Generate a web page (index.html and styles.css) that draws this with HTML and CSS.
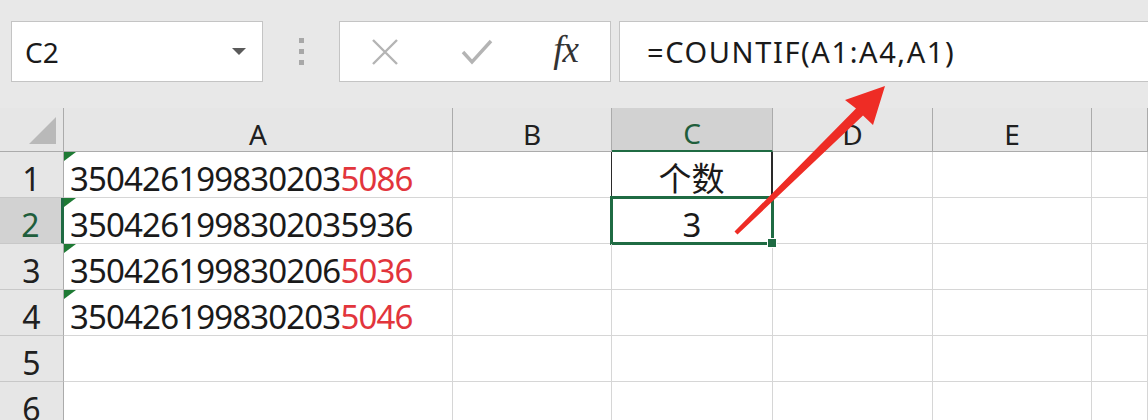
FILE: index.html
```html
<!DOCTYPE html>
<html lang="zh">
<head>
    <meta charset="UTF-8" />
    <title>COUNTIF</title>
    <link rel="stylesheet" href="styles.css">
</head>
<body>
<div class="toolbar">
    <div class="name-box">
        <span>C2</span>
        <svg class="caret" width="14" height="8" viewBox="0 0 14 8"><path d="M0 0 L14 0 L7 7 Z" fill="#5a5a5a"/></svg>
    </div>
    <div class="grip"><i></i><i></i><i></i></div>
    <div class="fn-box">
        <svg class="fn-icon" width="30" height="30" viewBox="0 0 30 30"><path d="M3 3 L27 27 M27 3 L3 27" stroke="#b4b4b4" stroke-width="2.4" fill="none"/></svg>
        <svg class="fn-icon" width="34" height="30" viewBox="0 0 34 30"><path d="M3 15 L12 25 L31 4" stroke="#b4b4b4" stroke-width="3.4" fill="none"/></svg>
        <span class="fx">fx</span>
    </div>
    <div class="formula">=COUNTIF(A1:A4,A1)</div>
</div>

<div class="sheet">
    <div class="corner"><span class="corner-tri"></span></div>
    <div class="col-head">A</div>
    <div class="col-head">B</div>
    <div class="col-head active">C</div>
    <div class="col-head">D</div>
    <div class="col-head">E</div>
    <div class="col-head"></div>

    <div class="row-head">1</div>
    <div class="cell text"><span class="mark"></span>350426199830203<em>5086</em></div>
    <div class="cell"></div>
    <div class="cell center boxed">个数</div>
    <div class="cell"></div>
    <div class="cell"></div>
    <div class="cell"></div>

    <div class="row-head active">2</div>
    <div class="cell text"><span class="mark"></span>3504261998302035936</div>
    <div class="cell"></div>
    <div class="cell center selected">3</div>
    <div class="cell"></div>
    <div class="cell"></div>
    <div class="cell"></div>

    <div class="row-head">3</div>
    <div class="cell text"><span class="mark"></span>350426199830206<em>5036</em></div>
    <div class="cell"></div>
    <div class="cell"></div>
    <div class="cell"></div>
    <div class="cell"></div>
    <div class="cell"></div>

    <div class="row-head">4</div>
    <div class="cell text"><span class="mark"></span>350426199830203<em>5046</em></div>
    <div class="cell"></div>
    <div class="cell"></div>
    <div class="cell"></div>
    <div class="cell"></div>
    <div class="cell"></div>

    <div class="row-head">5</div>
    <div class="cell"></div>
    <div class="cell"></div>
    <div class="cell"></div>
    <div class="cell"></div>
    <div class="cell"></div>
    <div class="cell"></div>

    <div class="row-head">6</div>
    <div class="cell"></div>
    <div class="cell"></div>
    <div class="cell"></div>
    <div class="cell"></div>
    <div class="cell"></div>
    <div class="cell"></div>
</div>

<svg class="arrow" width="1148" height="420" viewBox="0 0 1148 420">
    <polygon points="734.5,231.5 856,108.4 845,100 885,86 873,125 863,115.6 737.5,234.5" fill="#ee2c25"/>
</svg>
</body>
</html>
```

FILE: styles.css
```css
body {
  margin: 0;
  width: 1148px;
  height: 420px;
  overflow: hidden;
  position: relative;
  background: #ffffff;
  font-family: "Noto Sans", "Noto Sans CJK SC", sans-serif;
  color: #1a1a1a;
}

.toolbar {
  height: 108px;
  box-sizing: border-box;
  padding: 21px 0 0 11px;
  display: flex;
  align-items: flex-start;
  background-color: #e8e8e8;
}

.name-box,
.fn-box,
.formula {
  height: 61px;
  box-sizing: border-box;
  background: #ffffff;
  border: 1px solid #c4c4c4;
  display: flex;
  align-items: center;
}

.name-box {
  width: 252px;
  padding: 0 16px 0 13px;
  justify-content: space-between;
  font-size: 28px;
}

.grip {
  width: 76px;
  height: 61px;
  display: flex;
  flex-direction: column;
  align-items: center;
  justify-content: center;
  gap: 6px;
}

.grip i {
  width: 5px;
  height: 5px;
  background: #a8a8a8;
}

.fn-box {
  width: 272px;
  padding: 0 32px 0 30px;
  justify-content: space-between;
}

.fn-icon {
  display: block;
}

.fx {
  font-family: "Liberation Serif", serif;
  font-style: italic;
  font-size: 37px;
  color: #333333;
  margin-top: -4px;
  letter-spacing: -1px;
}

.formula {
  flex: 1;
  margin-left: 8px;
  margin-right: -4px;
  padding-left: 27px;
  font-size: 29px;
  letter-spacing: 1.6px;
}

.sheet {
  display: grid;
  grid-template-columns: 64px 389px 159px 161px 160px 159px 1fr;
  grid-template-rows: 44px repeat(6, 46px);
}

.corner,
.col-head,
.row-head {
  background-color: #e6e6e6;
  box-sizing: border-box;
  border-right: 1px solid #ababab;
  border-bottom: 1px solid #ababab;
  display: flex;
  align-items: center;
  justify-content: center;
  color: #202020;
}

.corner {
  align-items: flex-end;
  justify-content: flex-end;
  padding: 0 7px 7px 0;
}

.corner-tri {
  width: 0;
  height: 0;
  border-left: 27px solid transparent;
  border-bottom: 27px solid #b9b9b9;
}

.col-head {
  font-size: 28px;
  padding-top: 8px;
}

.col-head.active {
  background-color: #d2d2d2;
  color: #1f5e3c;
  border-bottom: 2px solid #1f6b43;
}

.row-head {
  font-size: 32px;
  border-bottom-color: #c8c8c8;
  padding-top: 8px;
}

.row-head.active {
  background-color: #d2d2d2;
  color: #1f5e3c;
  border-right: 3px solid #1f6b43;
}

.cell {
  position: relative;
  box-sizing: border-box;
  border-right: 1px solid #d6d6d6;
  border-bottom: 1px solid #d6d6d6;
  font-size: 33px;
  line-height: 1;
  display: flex;
  align-items: flex-end;
  padding: 0 0 2px 6px;
  white-space: nowrap;
}

.cell.text {
  letter-spacing: -0.85px;
}

.cell em {
  font-style: normal;
  color: #e2353c;
}

.cell.center {
  justify-content: center;
  padding-left: 0;
}

.mark {
  position: absolute;
  left: 0;
  top: 0;
  width: 0;
  height: 0;
  border-top: 9px solid #1e7a34;
  border-right: 12px solid transparent;
}

.boxed {
  border-left: 1px solid #2a2a2a;
  border-right: 2px solid #2a2a2a;
  margin-left: -1px;
}

.selected::after {
  content: "";
  position: absolute;
  left: -2px;
  top: -2px;
  right: -2px;
  bottom: -2px;
  border: 3px solid #1f6b43;
}

.selected::before {
  content: "";
  position: absolute;
  right: -5px;
  bottom: -5px;
  width: 8px;
  height: 8px;
  background: #1f6b43;
  border: 1px solid #ffffff;
  z-index: 1;
}

.arrow {
  position: absolute;
  left: 0;
  top: 0;
  pointer-events: none;
}
```
